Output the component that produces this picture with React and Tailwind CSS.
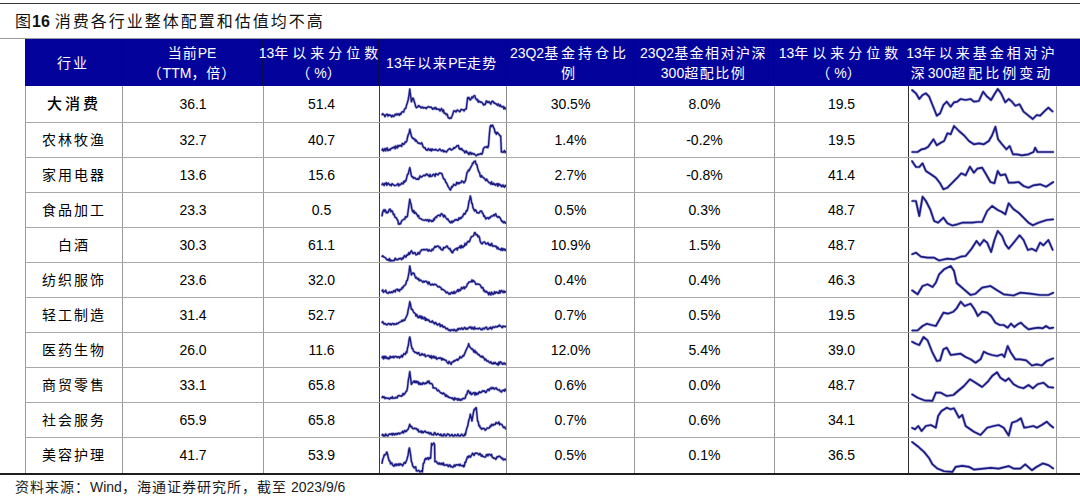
import React from 'react';

const FONT = "font-['Liberation_Sans','Noto_Sans_CJK_SC',sans-serif]";

// 把中文字符单独包起来，给它们加字距
function Cjk({ text, tr }) {
  const parts = text.split(/([\u3000-\u303f\u4e00-\u9fff\uff00-\uffef]+)/);
  return parts.map((p, i) => (i % 2 ? <span key={i} className={tr}>{p}</span> : p));
}

const HEAD = [
  { lines: ['行业'], tr: 'tracking-[2px]' },
  { lines: ['当前PE', '（TTM，倍）'], tr: 'tracking-[1px]' },
  { lines: ['13年以来分位数', '（%）'], tr: 'tracking-[4px]' },
  { lines: ['13年以来PE走势'], tr: 'tracking-[1.5px]' },
  { lines: ['23Q2基金持仓比', '例'], tr: 'tracking-[3px]' },
  { lines: ['23Q2基金相对沪深', '300超配比例'], tr: 'tracking-[1.5px]' },
  { lines: ['13年以来分位数', '（%）'], tr: 'tracking-[4px]' },
  { lines: ['13年以来基金相对沪', '深300超配比例变动'], tr: 'tracking-[3px]' },
];

const ROWS = [
  ['大消费', '36.1', '51.4', '30.5%', '8.0%', '19.5'],
  ['农林牧渔', '32.7', '40.7', '1.4%', '-0.2%', '19.5'],
  ['家用电器', '13.6', '15.6', '2.7%', '-0.8%', '41.4'],
  ['食品加工', '23.3', '0.5', '0.5%', '0.3%', '48.7'],
  ['白酒', '30.3', '61.1', '10.9%', '1.5%', '48.7'],
  ['纺织服饰', '23.6', '32.0', '0.4%', '0.4%', '46.3'],
  ['轻工制造', '31.4', '52.7', '0.7%', '0.5%', '19.5'],
  ['医药生物', '26.0', '11.6', '12.0%', '5.4%', '39.0'],
  ['商贸零售', '33.1', '65.8', '0.6%', '0.0%', '48.7'],
  ['社会服务', '65.9', '65.8', '0.7%', '0.6%', '34.1'],
  ['美容护理', '41.7', '53.9', '0.5%', '0.1%', '36.5'],
];

// PE 走势：x 以 1/3 像素为单位，y 为行内像素
const PE = [
  [[33,29],[60,29.7],[90,28.3],[105,22.3],[112,14],[117,3],[122,15.7],[128,12.3],[135,20.7],[145,19.7],[160,21.7],[180,21.3],[200,23],[215,24],[225,27.3],[235,31.7],[242,32.3],[250,25],[270,25],[288,23],[292,11.7],[300,14],[312,9.7],[320,14],[330,16.3],[340,19],[350,15],[360,17.3],[370,15.7],[380,18.3],[395,20.7],[408,22.3]],
  [[33,27.3],[60,25.7],[90,23],[108,18],[117,6.3],[122,13],[130,16.3],[140,19],[155,21.3],[165,26.3],[200,27.3],[230,28],[250,24.7],[262,23],[272,26.3],[290,29.7],[320,32.3],[335,31.3],[342,24.7],[355,23],[360,3.7],[368,2.3],[375,9.7],[385,10.7],[392,13],[394,29],[408,28.7]],
  [[33,27],[50,25.7],[70,27.3],[90,26.3],[105,23],[117,9.7],[122,18],[130,19.7],[140,21.3],[150,18.7],[165,17.3],[185,18],[200,16.3],[212,15.3],[218,19.7],[228,24.7],[240,32],[250,26.3],[270,24.7],[285,23],[290,14.7],[305,7.3],[315,3],[322,9.7],[330,18],[345,21.3],[360,24.7],[375,26.3],[390,27.3],[408,28]],
  [[33,23],[38,17],[48,19],[58,16.3],[70,21.3],[85,31.3],[100,26.3],[110,23],[117,6.3],[125,18],[135,19.7],[150,25.7],[170,27],[185,28],[200,23],[215,21.3],[230,26.3],[245,29.7],[270,24.7],[290,18],[300,3],[308,14.7],[320,19.7],[332,18],[345,24.7],[360,24.7],[375,21.3],[390,24.7],[400,29.7],[408,30.3]],
  [[33,28.7],[60,32],[90,30.7],[110,27.3],[120,23.7],[140,26.3],[160,21.3],[180,23],[200,18],[215,21.3],[230,18],[245,24.7],[265,19.7],[280,18],[290,14.7],[300,11.3],[315,4.7],[325,8],[332,14.7],[345,14.7],[360,16.3],[375,18],[390,21.3],[408,21.3]],
  [[33,28],[60,29.5],[90,26.5],[105,21],[112,14],[117,3],[122,12],[128,10],[135,15],[150,17],[170,19.5],[200,23],[220,27],[240,31],[260,28],[285,24],[298,19],[305,17],[315,20],[330,22],[345,29],[360,31],[380,29],[408,28.5]],
  [[33,24.7],[50,26.3],[80,25.7],[100,22.3],[110,16.3],[117,3.7],[122,11.3],[130,14.7],[140,18],[160,20.3],[190,24.7],[220,29],[240,33],[270,31.3],[300,29.7],[330,30.7],[360,30.3],[390,28],[408,29]],
  [[33,24.7],[60,24.7],[90,24],[108,19.7],[117,4],[122,13],[128,18],[140,20.7],[160,22],[190,24.7],[220,26.3],[240,30.7],[260,26.3],[280,23],[295,10.7],[305,16.3],[320,19.7],[340,24.7],[360,29.7],[380,31.3],[395,29.7],[408,30.7]],
  [[33,29.7],[60,29.7],[90,28],[108,23],[117,3.7],[122,16.3],[130,13],[140,14.7],[155,16.3],[175,13],[190,19.7],[210,24.7],[240,29.7],[270,32.3],[285,29.7],[292,23],[305,26.3],[330,24.7],[350,23],[370,19.7],[390,23],[408,22.3]],
  [[33,32.5],[80,31.3],[100,28.7],[112,26.3],[117,21.3],[125,25.3],[140,27.3],[170,29.7],[200,31.3],[240,32.5],[285,32],[290,24.7],[300,11.3],[305,18],[312,6.3],[318,4.7],[322,18],[330,24.7],[345,27.3],[360,23],[380,19.7],[395,21.3],[402,24.7],[408,26.3]],
  [[33,24.7],[40,16.3],[48,13.7],[55,22.3],[65,26.3],[80,25.7],[95,27],[108,21.3],[116,9.7],[122,23],[128,28],[135,28],[137,32],[150,32.5],[155,33],[158,24.7],[165,19.7],[180,19.7],[183,5.3],[192,6.3],[193,23],[210,24.7],[225,26.3],[245,28],[265,25.7],[280,28],[290,19.7],[305,16.3],[320,14.7],[340,18],[360,16.3],[375,19.7],[390,18],[400,21.3],[408,20.3]],
];

// 超配比例变动
const AL = [
  [[33,4],[45,7.3],[55,13],[65,9],[75,7.3],[85,10.7],[95,19],[108,29.7],[118,27.3],[128,19],[138,15.7],[150,20.7],[160,16.3],[170,15.7],[180,13],[195,14],[210,13],[220,15.7],[235,15],[248,5.7],[260,10.7],[272,14],[282,8.3],[292,3],[302,7.3],[315,16.3],[325,13],[335,15.7],[345,19.7],[358,18.3],[370,25.7],[385,29.7],[398,33],[410,29],[420,29.7],[432,25.7],[445,21.7],[458,25.7]],
  [[33,29],[50,29],[62,26.3],[72,25.7],[82,23.7],[98,16.3],[108,22.3],[120,19.7],[130,18],[140,10.3],[150,11.3],[160,3],[175,8],[190,12.3],[205,18],[220,21.3],[235,20.3],[250,21.3],[265,18],[275,12.3],[285,3.7],[293,16.3],[305,21.3],[318,26.3],[328,23],[338,31.3],[350,31.3],[365,32.3],[385,31.3],[400,29],[405,24.7],[412,29],[430,29],[460,29]],
  [[33,3],[45,9],[55,9],[65,5.3],[75,13],[90,16.3],[105,19.7],[118,25.3],[128,31.3],[140,29.7],[155,24.7],[170,19.7],[182,15.3],[195,17.3],[208,8.7],[220,14.7],[230,10.7],[245,9.7],[255,15.3],[270,24],[282,25.3],[292,13],[300,17.3],[315,16.3],[325,24.7],[340,24.7],[355,24],[370,28],[385,29.7],[400,27.3],[420,26.3],[438,28.7],[460,24]],
  [[33,8],[45,8],[55,23],[65,3.7],[75,8],[88,16.3],[100,28],[112,29.7],[128,24.7],[140,30.3],[155,32.5],[170,31.3],[185,29.7],[200,29.7],[215,29.7],[230,29],[245,29],[260,18],[275,13],[292,17],[305,19],[315,21.3],[325,10.3],[340,16.3],[355,19.7],[370,24.7],[385,29.7],[398,32.3],[415,29.7],[440,27],[460,26.3]],
  [[33,26.3],[45,24.7],[60,28.7],[80,29.7],[100,29.7],[115,32.5],[140,30.7],[160,31.3],[180,28.7],[195,28],[212,21.3],[228,13],[238,17.3],[250,12],[260,14.7],[272,24],[282,12],[292,3],[305,8],[315,16.3],[325,20.7],[340,14.7],[358,7.3],[370,12],[383,22],[395,20.7],[408,23],[420,14.7],[430,17.3],[445,12],[458,22]],
  [[33,27.3],[50,31.3],[65,23],[80,21.3],[95,24],[105,19.7],[115,11.3],[130,6.3],[150,3],[160,8],[168,20],[190,26.3],[210,32],[225,30.7],[245,24.7],[270,23],[290,27.3],[310,31.3],[340,32.5],[360,29.7],[390,30.7],[420,32],[445,32],[460,29.7]],
  [[33,32.5],[50,32.3],[65,28],[78,25.7],[92,27],[105,28],[115,22.3],[128,14.7],[142,15.7],[158,13.7],[168,10.3],[180,3.7],[192,8],[210,5.7],[222,11.3],[232,18],[245,13.7],[260,14.7],[272,18],[285,24.7],[298,27],[310,27],[322,29.7],[332,25.7],[342,29],[352,26.3],[362,24.7],[372,28],[385,31.3],[400,30.3],[415,29.7],[428,30.3],[438,28],[448,30.3],[460,29.7]],
  [[33,8.7],[45,10.7],[55,12],[68,4],[80,7.3],[95,19.7],[108,28],[118,27.3],[128,16.3],[138,14.7],[150,22],[165,21.3],[180,20.7],[195,24],[210,26.3],[225,29.7],[240,26.3],[250,18.7],[262,20.7],[275,22],[290,23],[305,21.3],[312,24],[322,13],[330,18.7],[345,26.3],[360,26.3],[378,27.3],[395,32.5],[410,31.3],[425,32.5],[440,28],[460,25.3]],
  [[33,26.3],[50,29.7],[70,32.3],[95,32.8],[105,24.7],[120,24.7],[138,28],[158,27],[172,23],[190,18],[208,11.3],[225,14.7],[245,19],[262,13.7],[275,8],[290,4.3],[300,9.7],[315,13],[325,10.3],[340,16.3],[355,19],[370,20.3],[385,17],[398,20.3],[412,16.3],[430,14.7],[445,19],[460,19.7]],
  [[33,24.7],[42,26.3],[52,23],[62,28],[75,23],[90,22],[105,24.7],[112,13],[122,8],[138,4.7],[150,6.3],[160,5.3],[175,14.7],[185,12],[195,23],[220,28.7],[240,32],[260,24.7],[280,23],[295,22],[310,24.7],[325,32.5],[335,19.7],[350,18],[362,15.3],[372,24.7],[385,24],[400,23],[410,24.7],[425,22],[440,18.7],[450,22],[460,24.7]],
  [[33,3.7],[50,8],[70,13.7],[85,19.7],[95,25.7],[110,29.7],[130,32.3],[155,33],[165,28],[185,27],[205,28],[220,30.7],[250,29.7],[270,29],[295,29.7],[325,27.3],[340,29.7],[360,29.7],[375,25.7],[395,31.3],[410,28],[428,24.7],[445,26.3],[460,29.7]],
];

// 折线加上细小的抖动，模拟日度 PE
function noisyPath(pts, seed, h) {
  let s = seed;
  const rnd = () => {
    s = (s * 16807) % 2147483647;
    return s / 2147483647;
  };
  const out = [];
  for (let i = 0; i < pts.length - 1; i++) {
    const [x0, y0] = pts[i];
    const [x1, y1] = pts[i + 1];
    const n = Math.max(1, Math.round((x1 - x0) / 2.2));
    for (let k = 0; k < n; k++) {
      const t = k / n;
      let y = y0 + (y1 - y0) * t + (k === 0 ? 0 : (rnd() - 0.5) * 2.8);
      y = Math.min(h - 1, Math.max(1, y));
      out.push([x0 + (x1 - x0) * t, y]);
    }
  }
  out.push(pts[pts.length - 1]);
  return 'M' + out.map((p) => p[0].toFixed(1) + ' ' + p[1].toFixed(1)).join('L');
}

function plainPath(pts) {
  return 'M' + pts.map((p) => p[0] + ' ' + p[1]).join('L');
}

function Spark({ d, x, w, h, width }) {
  return (
    <svg viewBox={`${x} 0 ${w} ${h}`} preserveAspectRatio="none" className="block w-full h-full">
      <path d={d} fill="none" stroke="#b4b4e0" strokeWidth={width + 1.3} strokeLinejoin="round" vectorEffect="non-scaling-stroke" />
      <path d={d} fill="none" stroke="#1a1a80" strokeWidth={width} strokeLinejoin="round" strokeLinecap="round" vectorEffect="non-scaling-stroke" />
    </svg>
  );
}

const COLS = 'grid grid-cols-[97px_141px_116px_127px_128px_140px_134px_148px]';

function App() {
  return (
    <div className={`w-[1080px] h-[499px] overflow-hidden bg-white text-black ${FONT}`}>
      <div className="mt-[3px] h-px bg-[#3a3a3a]" />
      <div className="h-[34px] flex items-center pl-[15px] pt-[2px] text-[16px] text-[#111]">
        <Cjk text="图" tr="tracking-[1px]" />
        <span className="font-bold mr-[5px]">16</span>
        <Cjk text="消费各行业整体配置和估值均不高" tr="tracking-[2px]" />
      </div>
      <div className="h-px bg-[#9a9a9a]" />

      <div className="pl-[25px]">
        {/* 表头 */}
        <div className={`${COLS} h-[47px] bg-[#03039c] text-white text-[14px]`}>
          {HEAD.map((c, i) => (
            <div
              key={i}
              className={`flex flex-col items-center justify-center leading-[20px] ${i < HEAD.length - 1 ? 'border-r border-[#0a0a4a]' : ''}`}
            >
              {c.lines.map((l, j) => (
                <div key={j} className="whitespace-nowrap">
                  <Cjk text={l} tr={c.tr} />
                </div>
              ))}
            </div>
          ))}
        </div>

        {/* 数据行 */}
        {ROWS.map((r, i) => {
          const h = i === 0 ? 36 : 34;
          return (
            <div
              key={r[0]}
              className={`${COLS} border-l border-[#9a9a9a] text-[14px] ${i === 0 ? 'h-[37px]' : 'h-[35px]'} ${i < ROWS.length - 1 ? 'border-b border-b-[#a8a8a8]' : ''}`}
            >
              <div className={`flex items-center justify-center border-r border-[#9a9a9a] ${i === 0 ? 'text-[15px] font-medium' : 'text-[14px]'}`}>
                <Cjk text={r[0]} tr={i === 0 ? 'tracking-[3px]' : 'tracking-[2px]'} />
              </div>
              <div className="flex items-center justify-center border-r border-[#9a9a9a]">{r[1]}</div>
              <div className="flex items-center justify-center border-r border-[#3c3c3c]">{r[2]}</div>
              <div className="border-r border-[#8a8a8a] overflow-hidden">
                <Spark d={noisyPath(PE[i], 1234 + i * 977, h)} x={27} w={381} h={h} width={1.4} />
              </div>
              <div className="flex items-center justify-center border-r border-[#9a9a9a]">{r[3]}</div>
              <div className="flex items-center justify-center border-r border-[#9a9a9a]">{r[4]}</div>
              <div className="flex items-center justify-center border-r border-[#2e2e2e]">{r[5]}</div>
              <div className="border-r border-[#9a9a9a] overflow-hidden">
                <Spark d={plainPath(AL[i])} x={24} w={444} h={h} width={1.7} />
              </div>
            </div>
          );
        })}
      </div>

      <div className="h-[2px] bg-[#1e1e1e]" />
      <div className="h-[24px] flex items-center pl-[15px] text-[14px] text-[#1a1a1a]">
        <Cjk text="资料来源：Wind，海通证券研究所，截至" tr="tracking-[1px]" />
        <span className="ml-[4px]">2023/9/6</span>
      </div>
    </div>
  );
}

export default App;
